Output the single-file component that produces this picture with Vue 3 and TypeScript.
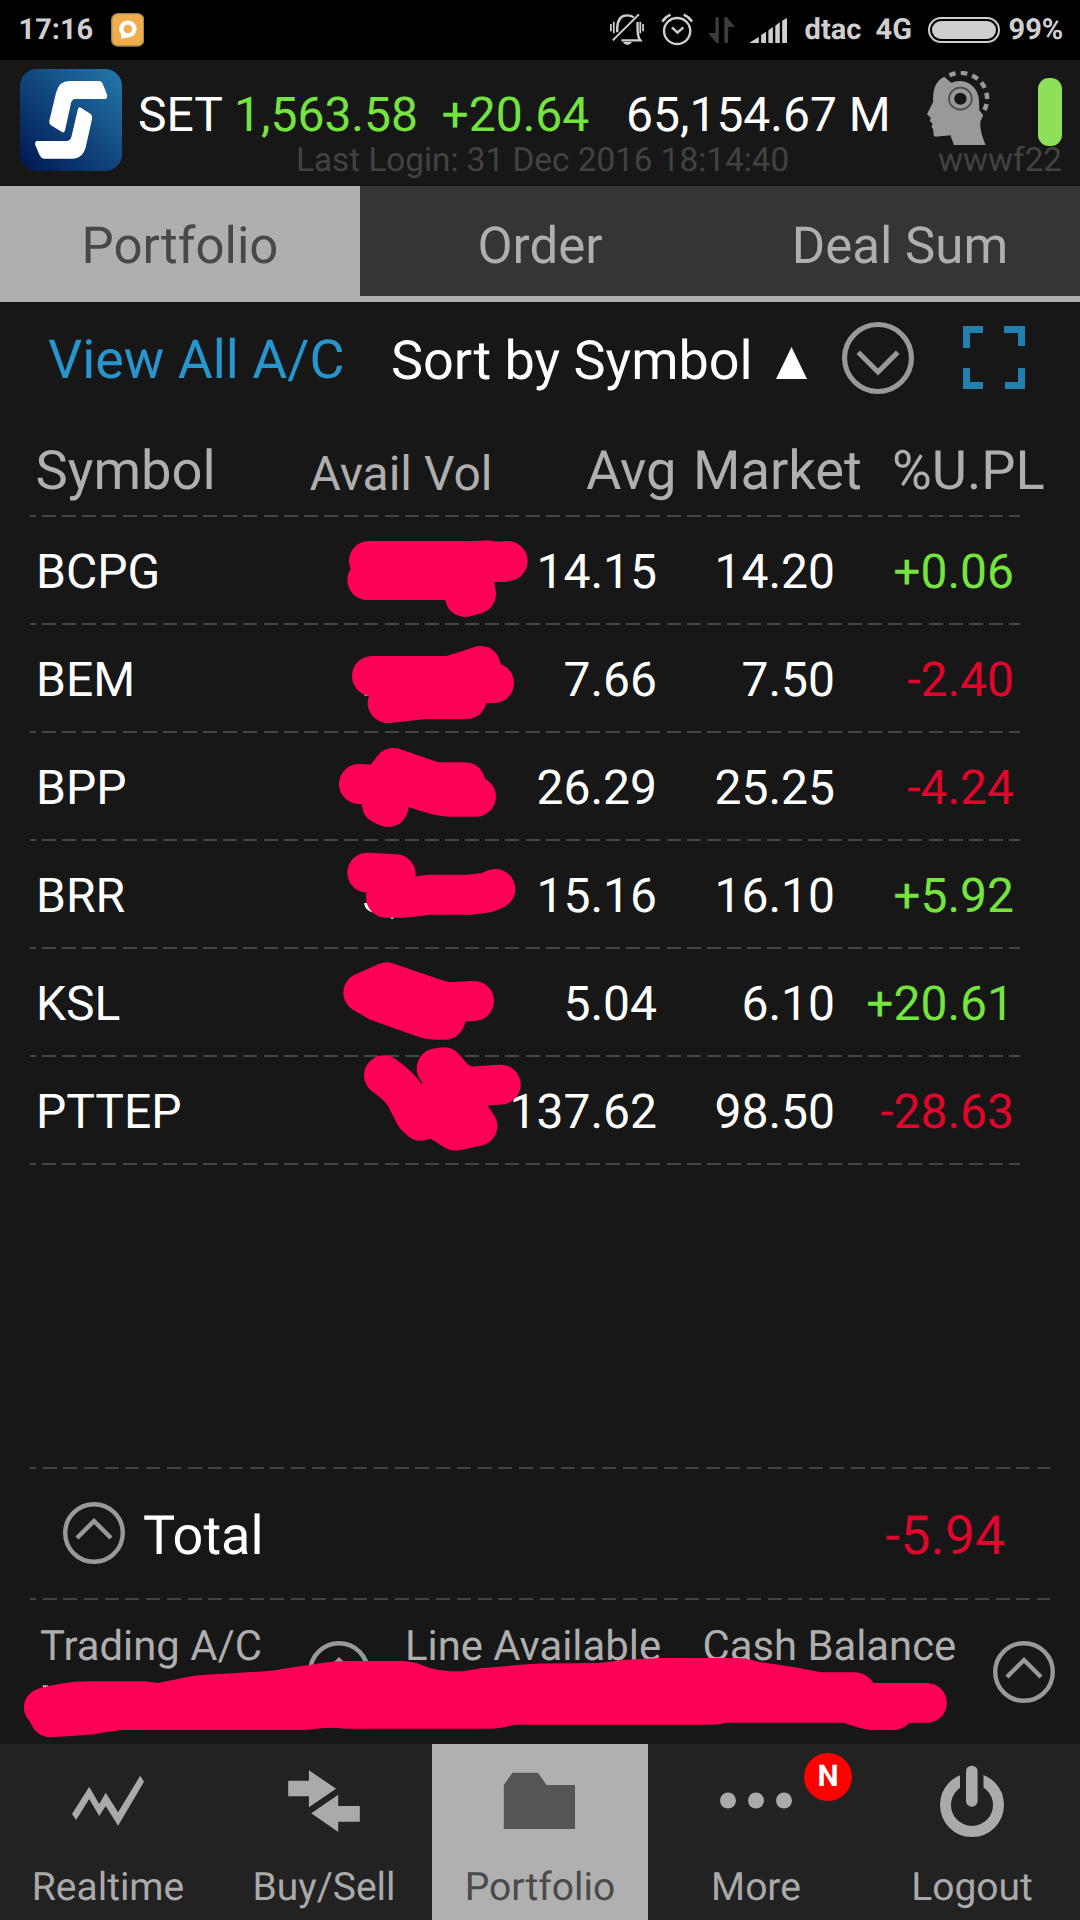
<script setup lang="ts">
interface Holding {
  symbol: string
  avg: string
  market: string
  pl: string
}

const holdings: Holding[] = [
  { symbol: 'BCPG', avg: '14.15', market: '14.20', pl: '+0.06' },
  { symbol: 'BEM', avg: '7.66', market: '7.50', pl: '-2.40' },
  { symbol: 'BPP', avg: '26.29', market: '25.25', pl: '-4.24' },
  { symbol: 'BRR', avg: '15.16', market: '16.10', pl: '+5.92' },
  { symbol: 'KSL', avg: '5.04', market: '6.10', pl: '+20.61' },
  { symbol: 'PTTEP', avg: '137.62', market: '98.50', pl: '-28.63' },
]

const trend = (value: string): string => (value.startsWith('-') ? 'down' : 'up')
</script>

<template>
  <div class="screen">
    <div class="status">
      <span class="clock">17:16</span>
      <svg class="app-dot" viewBox="320 39 97 101" preserveAspectRatio="none">
        <rect x="322" y="41" width="93" height="97" rx="18" fill="#efae4b" stroke="#a18750" stroke-width="4" />
        <path d="M350 98 V117 L372 111 Z" fill="#fff" />
        <circle cx="369" cy="87" r="19" fill="none" stroke="#fff" stroke-width="13" />
      </svg>
      <svg class="sys-icons" viewBox="203 0 516 180" preserveAspectRatio="none">
        <g fill="none" stroke="#cfcfcf" stroke-width="7">
          <path d="M224 97 V84 Q225 46 253 46 Q264 46 272 52" />
          <path d="M283 66 V90 Q284 112 291 121 H236" />
          <path d="M287 43 L211 121" stroke-width="6" />
          <path d="M205.500 72 V94 M214 65 V100 M291 65 V100 M299 72 V94" stroke-width="5" />
          <ellipse cx="398" cy="93" rx="38" ry="39" />
          <path d="M383 82 L399 98 L416 82" />
          <path d="M355 65 Q363 51 379 44 M417 44 Q433 51 441 65" />
        </g>
        <path d="M240 126 H267 Q261 135 253.500 135 Q246 135 240 126 Z" fill="#cfcfcf" />
        <path d="M509 52 H519 V129 H512 L488 99 H509 Z M535 129 V52 H542 L566 81 H546 V129 Z" fill="#3d3d3d" />
        <path d="M610 129 V127 L635 111 V129 Z M642 129 V105 L656 95 V129 Z M663 129 V91 L676 81 V129 Z M683 129 V77 L696 67 V129 Z M703 129 V62 L717 54 V129 Z" fill="#cfcfcf" />
      </svg>
      <span class="carrier">dtac</span>
      <span class="network">4G</span>
      <span class="battery"><i></i></span>
      <span class="percent">99%</span>
    </div>

    <header class="header">
      <svg class="logo" viewBox="58 207 296 306" preserveAspectRatio="none">
        <defs>
          <linearGradient id="logoFill" x1="0" y1="1" x2="1" y2="0">
            <stop offset="0" stop-color="#001650" />
            <stop offset="0.5" stop-color="#11467d" />
            <stop offset="1" stop-color="#2579ab" />
          </linearGradient>
        </defs>
        <rect x="58" y="207" width="296" height="306" rx="50" fill="url(#logoFill)" />
        <path d="M202 243 H288 Q295 244 298 251 L311 285 Q312 297 305 297 H218 Q209 298 206 309 L189 390 Q187 399 181 397 L150 377 Q142 372 143 363 L163 277 Q171 243 202 243 Z" fill="#fff" />
        <path d="M235 323 L263 342 Q269 347 267 357 L249 440 Q240 476 209 476 H128 Q119 475 115 466 L102 434 Q101 423 108 423 H195 Q204 422 207 411 L226 328 Q228 319 235 323 Z" fill="#fff" />
      </svg>
      <div class="market">
        <div class="quote">
          <span class="name">SET</span>
          <span class="index">1,563.58</span>
          <span class="change">+20.64</span>
          <span class="value">65,154.67 M</span>
        </div>
        <div class="login">Last Login: 31 Dec 2016 18:14:40</div>
      </div>
      <div class="user">
        <div class="user-icons">
          <svg class="head" viewBox="1125 212 184 224" preserveAspectRatio="none">
            <path d="M1175 229 L1195 247 Q1228 234 1254 254 Q1277 273 1276 308 L1277 330 L1288 345 L1280 364 Q1277 390 1295 434 H1203 L1193 405 L1150 409 Q1142 407 1144 397 L1143 387 L1138 380 L1141 370 L1133 362 L1136 352 L1125 342 L1143 304 Q1139 247 1175 229 Z" fill="#999" />
            <circle cx="1222" cy="295" r="33" fill="none" stroke="#4b4b4b" stroke-width="5" />
            <circle cx="1222" cy="295" r="18" fill="#171717" />
            <path d="M1190 225 A77 77 0 0 1 1291 330" fill="none" stroke="#999" stroke-width="13" stroke-dasharray="19 15" />
          </svg>
          <span class="signal"></span>
        </div>
        <div class="username">wwwf22</div>
      </div>
    </header>

    <nav class="tabs">
      <div class="tab active">Portfolio</div>
      <div class="tab">Order</div>
      <div class="tab">Deal Sum</div>
    </nav>

    <section class="tools">
      <span class="view-all">View All A/C</span>
      <span class="sort">Sort by Symbol</span>
      <svg class="arrow" viewBox="0 0 31 32"><path d="M15.500 0 L31 32 H0 Z" fill="#fff" /></svg>
      <svg class="round big" viewBox="0 0 62 62">
        <circle cx="31" cy="31" r="28.800" /><path d="M14 26 L31 43 L48 26" />
      </svg>
      <svg class="expand" viewBox="0 0 62 63">
        <path d="M0 0 H20 V7 H7 V22 H0 Z M41 0 H62 V20 H55 V7 H41 Z M0 42 H7 V56 H20 V63 H0 Z M55 42 H62 V63 H42 V56 H55 Z" fill="#237fae" />
      </svg>
    </section>

    <section class="table">
      <div class="head-row">
        <span class="c-symbol">Symbol</span>
        <span class="c-vol">Avail Vol</span>
        <span class="c-avg">Avg</span>
        <span class="c-market">Market</span>
        <span class="c-pl">%U.PL</span>
      </div>
      <div class="dash"></div>
      <template v-for="h in holdings" :key="h.symbol">
        <div class="row">
          <span class="symbol">{{ h.symbol }}</span>
          <span class="num">{{ h.avg }}</span>
          <span class="num">{{ h.market }}</span>
          <span class="num" :class="trend(h.pl)">{{ h.pl }}</span>
        </div>
        <div class="dash"></div>
      </template>
    </section>

    <section class="summary">
      <div class="dash wide"></div>
      <div class="total">
        <svg class="round" viewBox="0 0 62 62">
          <circle cx="31" cy="31" r="28.800" /><path d="M14 36 L31 19 L48 36" />
        </svg>
        <span class="total-label">Total</span>
        <span class="total-value down">-5.94</span>
      </div>
      <div class="dash wide"></div>
      <div class="account">
        <span class="acc-label trading">Trading A/C</span>
        <svg class="round" viewBox="0 0 62 62">
          <circle cx="31" cy="31" r="28.800" /><path d="M14 36 L31 19 L48 36" />
        </svg>
        <span class="acc-label line">Line Available</span>
        <span class="acc-label cash">Cash Balance</span>
        <svg class="round last" viewBox="0 0 62 62">
          <circle cx="31" cy="31" r="28.800" /><path d="M14 36 L31 19 L48 36" />
        </svg>
      </div>
    </section>

    <footer class="bottom">
      <div class="item">
        <svg viewBox="0 0 216 130">
          <path d="M72 70 L89.200 42.700 L99.200 60 L105.700 48.700 L118.100 68.300 L140.200 31.700 L144 37.700 L118.100 81.700 L105.700 62 L99.200 72 L89.200 55 L76.100 76 Z" fill="#aaa" />
        </svg>
        <span>Realtime</span>
      </div>
      <div class="item">
        <svg viewBox="0 0 216 130">
          <path d="M72.200 36.700 H92.900 V26.300 L120.100 44.700 L92.900 63.300 V52.300 H72.200 Z M95.300 69.300 L122.200 50.700 V62 H143.800 V77.700 H122.200 V88 Z" fill="#aaa" />
        </svg>
        <span>Buy/Sell</span>
      </div>
      <div class="item active">
        <svg viewBox="0 0 216 130">
          <path d="M71.800 41 L80.400 28.700 H106 L114.500 41 H143 V85 H71.800 Z" fill="#555" />
        </svg>
        <span>Portfolio</span>
      </div>
      <div class="item">
        <svg viewBox="0 0 216 130">
          <circle cx="80" cy="56.500" r="8" fill="#aaa" />
          <circle cx="108" cy="56.500" r="8" fill="#aaa" />
          <circle cx="136" cy="56.500" r="8" fill="#aaa" />
        </svg>
        <span>More</span>
        <b class="badge">N</b>
      </div>
      <div class="item">
        <svg viewBox="0 0 216 130">
          <circle cx="108" cy="61" r="26.500" fill="none" stroke="#aaa" stroke-width="11" />
          <rect x="96" y="20" width="23.500" height="33" fill="#222" />
          <rect x="102" y="21.700" width="11.600" height="41" rx="5.500" fill="#aaa" />
        </svg>
        <span>Logout</span>
      </div>
    </footer>

    <!-- marker strokes hiding the private figures -->
    <svg class="marker" viewBox="0 0 1080 1920">
      <g fill="#fff">
        <path d="M364.500 694 h5 v1.600 h-5 Z M43 1685.500 h5 v2 h-5 Z M391 917 h2.500 v1.800 h-2.500 Z" />
        <path d="M366 903 Q367 909 373 910.500" fill="none" stroke="#fff" stroke-width="4" />
      </g>
      <g fill="none" stroke="#ff0057" stroke-width="120" stroke-linecap="round" stroke-linejoin="round">
        <g transform="translate(330 520) scale(0.33333)">
          <path d="M117 123 H440 L470 121 L500 126 L533 123 L520 126 H300 M112 180 H430 L438 222 L405 231" />
          <path d="M126 468 H357 L425 447 L452 438 M492 489 H300 M173 549 L283 537 H410" />
          <path d="M87 792 L150 796 L190 744 L275 773 Q312 787 335 787 H406 M438 830 H360 Q325 830 245 800 L190 790 M150 800 L156 853 L175 861" />
        </g>
        <g transform="translate(300 800) scale(0.33333)">
          <path d="M202 218 L287 223 L258 293 H310 Q350 291 390 284 H510 L560 278 L586 267" />
          <path d="M190 578 L260 547 L385 590 Q425 606 455 607 L522 603 M190 578 L235 604 L370 652 Q387 659 405 659 H435 L455 607" />
          <path d="M252 826 Q303 862 318 892 L345 945 L362 962 L400 950 L466 992 L532 978 M410 805 L432 802 L465 840 L500 861 L602 854 M532 978 L480 900 L425 860 L400 950 M440 870 V960" />
        </g>
      </g>
      <path d="M24 1706 Q25 1692 43 1687 L62 1683.500 Q75 1681.300 88 1681.300 H144 Q152 1682 157.700 1683 L179 1678.700 Q194 1675 215 1674.300 L265 1671.300 Q280 1670 293 1667.300 L324 1662.700 Q334 1661 346 1661 H401 Q411 1661.500 417 1663.300 L430 1668 Q440 1671 450 1671.300 H463 L482 1668 Q510 1665.500 540 1663.500 L598 1663 Q610 1662 622 1660 L660 1658 H739 Q750 1659 760 1662 L795 1667.300 L821 1672.300 H856 Q867 1673 873.300 1683 H927 A19.800 19.800 0 0 1 927 1722.700 L909.500 1723 Q902 1730 894 1730 H869 L857 1727.300 L843 1722.700 H726 Q720 1724.500 712 1724.700 H515 Q504 1727.500 492 1728.700 H344 Q337 1727 320 1728.300 L306 1730 H119 L93 1734.300 Q72 1736.500 50 1737.300 Q36 1736.500 30 1721.700 Q23.500 1715 24 1706 Z" fill="#ff0057" />
    </svg>
  </div>
</template>

<style>
body {
  margin: 0;
  background: #171717;
}
</style>

<style scoped>
.screen {
  position: relative;
  display: flex;
  flex-direction: column;
  width: 1080px;
  height: 1920px;
  overflow: hidden;
  background: #171717;
  color: #fff;
  font-family: Roboto, 'Liberation Sans', sans-serif;
  white-space: nowrap;
  text-rendering: geometricPrecision;
}
svg { display: block; flex: none; }
span { flex: none; }

.status {
  display: flex;
  align-items: center;
  height: 60px;
  flex: none;
  background: #000;
  color: #cfcfcf;
  font-size: 29px;
  font-weight: 700;
  line-height: 62px;
}
.clock { width: 92px; margin-left: 18.500px; }
.app-dot { width: 33.400px; height: 33.700px; }
.sys-icons { width: 177.700px; height: 60px; margin-left: 466px; }
.carrier { width: 71px; margin-left: 17px; }
.network { width: 52px; }
.battery {
  box-sizing: border-box;
  width: 72px;
  height: 26px;
  padding: 2px;
  border: 2px solid #cfcfcf;
  border-radius: 13px;
}
.battery i { display: block; height: 18px; border-radius: 9px; background: #cfcfcf; }
.percent { margin-left: 9px; }

.header { display: flex; flex: none; height: 126px; }
.logo { width: 102px; height: 102px; margin: 9px 0 0 20px; }
.market { width: 788px; }
.quote { display: flex; height: 60px; padding-top: 25px; font-size: 48px; line-height: 60px; }
.name { width: 96px; margin-left: 16px; }
.index { width: 207.500px; color: #75e43e; }
.change { width: 184.500px; color: #75e43e; }
.login { margin: -4px 0 0 174px; color: #424242; font-size: 33.300px; line-height: 40px; }
.user { width: 152px; }
.user-icons { display: flex; height: 86px; }
.head { width: 63.400px; height: 74.700px; margin: 10.700px 0 0 17.400px; }
.signal { width: 24px; height: 68px; margin: 18px 0 0 47px; border-radius: 11px; background: #8ee05b; }
.username { margin: -5px 0 0 28px; color: #424242; font-size: 33.300px; line-height: 40px; }

.tabs { display: flex; flex: none; height: 116px; }
.tab {
  box-sizing: border-box;
  width: 360px;
  padding-top: 1px;
  border-bottom: 6px solid #afafaf;
  background: #353535;
  color: #afafaf;
  font-size: 51px;
  line-height: 120px;
  text-align: center;
}
.tab.active { background: #afafaf; color: #484848; }

.tools { display: flex; flex: none; height: 121px; font-size: 54px; line-height: 119px; }
.view-all { width: 343px; margin-left: 48px; color: #2796ce; font-size: 53.800px; line-height: 118px; }
.sort { width: 385px; }
.arrow { width: 31px; height: 32px; margin-top: 45px; }
.round { width: 62px; height: 62px; fill: none; stroke: #999; stroke-width: 4.400; }
.round.big { width: 72px; height: 72px; margin: 20px 0 0 35px; }
.expand { width: 62px; height: 63px; margin: 24px 0 0 49px; }

.table { height: 1045px; flex: none; }
.head-row { display: flex; height: 92px; color: #afafaf; font-size: 54.300px; line-height: 98px; }
.c-symbol { width: 274px; margin-left: 35.500px; }
.c-vol { width: 276.500px; font-size: 48px; line-height: 101px; }
.c-avg { width: 107px; }
.c-market { width: 199px; }
.dash {
  width: 990px;
  height: 2px;
  margin-left: 30px;
  background: repeating-linear-gradient(90deg, #454545 0 14px, transparent 14px 20.150px) -8.200px 0 / 1200px 2px no-repeat;
}
.dash.wide {
  width: 1020px;
  background: repeating-linear-gradient(90deg, #424242 0 14px, transparent 14px 20.720px) -8.200px 0 / 1240px 2px no-repeat;
}
.row {
  display: grid;
  grid-template-columns: 421px 200px 178px 179px;
  height: 106px;
  padding-left: 36px;
  font-size: 48px;
  line-height: 109px;
}
.num { text-align: right; }
.up { color: #75e43e; }
.down { color: #e0052b; }

.summary { height: 277px; flex: none; }
.table { margin-bottom: -1px; }
.total { display: flex; height: 129px; padding-left: 63px; font-size: 54px; line-height: 136px; }
.total .round { margin-top: 32.700px; }
.total-label { width: 742.500px; margin-left: 18px; }
.account { display: flex; height: 143px; color: #afafaf; }
.acc-label { font-size: 41.800px; line-height: 50px; margin-top: 22px; }
.account .round { margin-top: 41px; }
.trading { width: 268px; margin-left: 40px; }
.line { width: 297.500px; margin-left: 35px; }
.cash { width: 290.500px; }

.bottom { display: flex; flex: none; height: 176px; }
.item {
  position: relative;
  width: 216px;
  height: 176px;
  background: #222;
  color: #aaa;
  font-size: 39px;
  line-height: 46px;
  text-align: center;
}
.item svg { width: 216px; height: 130px; margin-bottom: -10px; }
.item.active { background: #b0b0b0; color: #4a4a4a; }
.badge {
  position: absolute;
  top: 9px;
  left: 156px;
  width: 48px;
  height: 48px;
  border-radius: 50%;
  background: #f00;
  color: #fff;
  font-size: 30px;
  line-height: 48px;
}
.marker { position: absolute; inset: 0; width: 1080px; height: 1920px; pointer-events: none; }
</style>
